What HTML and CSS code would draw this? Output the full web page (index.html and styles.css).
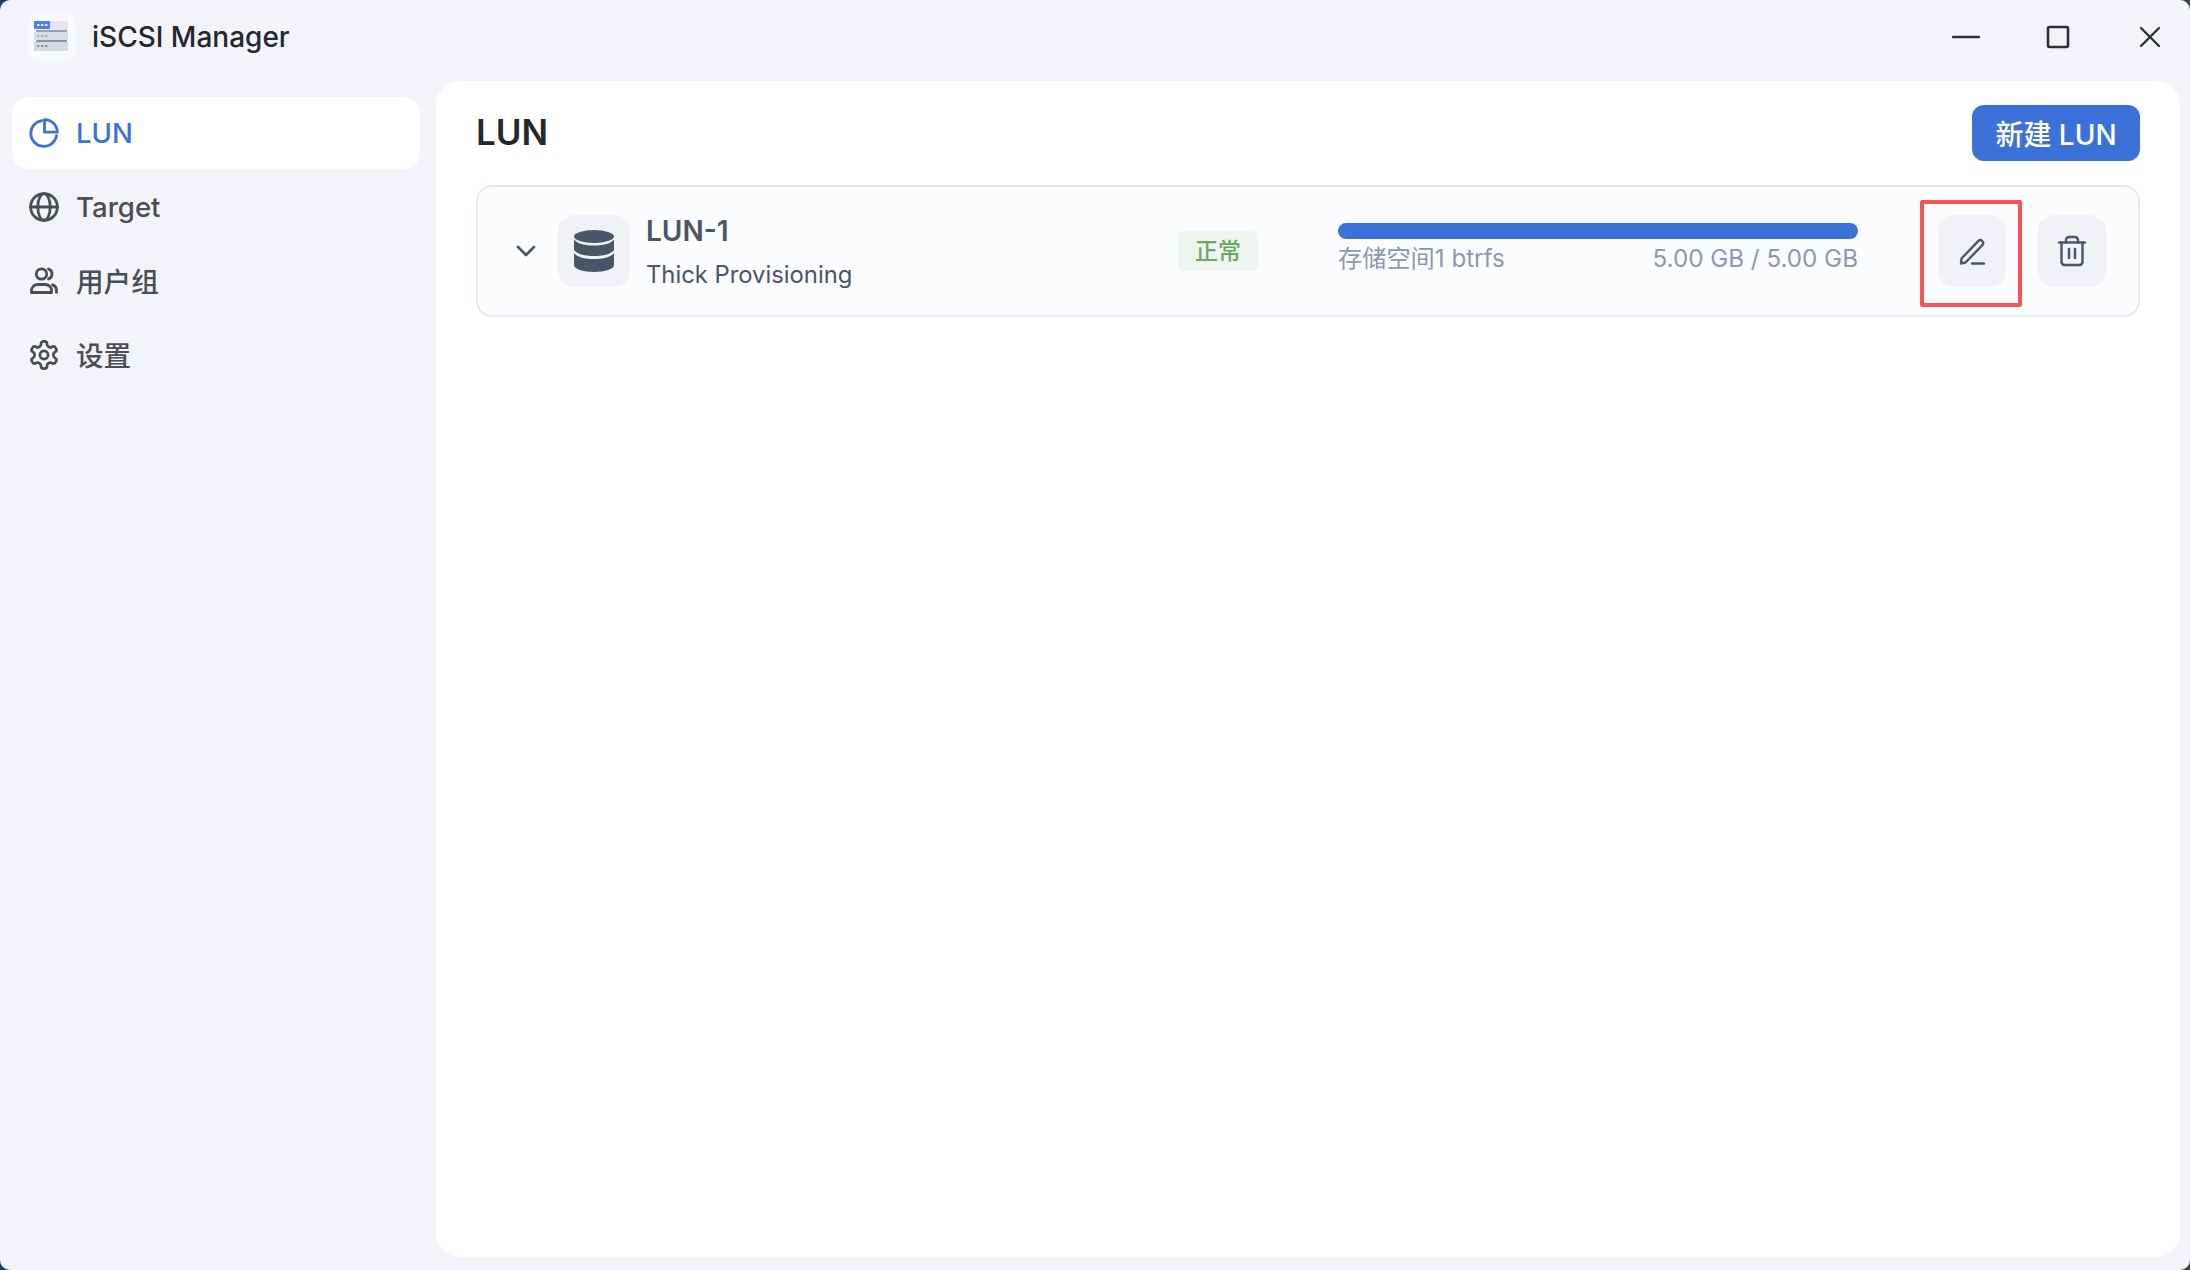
FILE: index.html
```html
<!DOCTYPE html>
<html lang="zh">
<head>
<meta charset="utf-8">
<title>iSCSI Manager</title>
<link rel="stylesheet" href="styles.css">
</head>
<body>
<div class="window">
  <header class="titlebar">
    <div class="brand">
      <div class="logo">
        <svg width="42" height="38" viewBox="0 0 42 38">
          <rect x="3" y="2" width="34" height="9" fill="#e3e7ec"/>
          <rect x="3" y="2" width="16" height="8" rx="1" fill="#4d7ff0"/>
          <rect x="6" y="5" width="2.5" height="2" fill="#dfe9ff"/><rect x="10" y="5" width="2.5" height="2" fill="#dfe9ff"/><rect x="14" y="5" width="2.5" height="2" fill="#dfe9ff"/>
          <rect x="5" y="11" width="31" height="2" fill="#98a3ae"/>
          <rect x="3" y="13" width="34" height="8" fill="#d8dee4"/>
          <rect x="6" y="16" width="2.5" height="2" fill="#a9b1ba"/><rect x="10" y="16" width="2.5" height="2" fill="#a9b1ba"/><rect x="14" y="16" width="2.5" height="2" fill="#a9b1ba"/>
          <rect x="5" y="21" width="31" height="2" fill="#8b96a1"/>
          <rect x="3" y="23" width="34" height="9" fill="#d3dae1"/>
          <rect x="6" y="26" width="2.5" height="2" fill="#8f98a2"/><rect x="10" y="26" width="2.5" height="2" fill="#8f98a2"/><rect x="14" y="26" width="2.5" height="2" fill="#8f98a2"/>
        </svg>
      </div>
      <span class="app-name">iSCSI Manager</span>
    </div>
    <div class="win-controls">
      <svg class="win-btn" width="28" height="28" viewBox="0 0 28 28"><path d="M1 14h26" stroke="#2c2f36" stroke-width="2.4" stroke-linecap="round"/></svg>
      <svg class="win-btn" width="28" height="28" viewBox="0 0 28 28"><rect x="4" y="4" width="20" height="20" rx="1.500" fill="none" stroke="#2c2f36" stroke-width="2.6"/></svg>
      <svg class="win-btn" width="28" height="28" viewBox="0 0 28 28"><path d="M5 5l18 18M23 5L5 23" stroke="#2c2f36" stroke-width="2.4" stroke-linecap="round"/></svg>
    </div>
  </header>
  <div class="content">
    <nav class="sidebar">
      <a class="nav-item active">
        <svg class="nav-icon" viewBox="0 0 30 30"><path d="M12.800 2.600A13 13 0 1 0 27.600 17.600"/><path d="M15.500 1.600A13 13 0 0 1 28.400 14.200H15.500z"/></svg>
        <span>LUN</span>
      </a>
      <a class="nav-item">
        <svg class="nav-icon" viewBox="0 0 30 30"><circle cx="15" cy="15" r="13.400"/><ellipse cx="15" cy="15" rx="6.200" ry="13.400"/><path d="M1.600 15h26.800"/></svg>
        <span>Target</span>
      </a>
      <a class="nav-item">
        <svg class="nav-icon" viewBox="0 0 30 30"><circle cx="12.500" cy="8" r="5.200"/><path d="M2.400 26.500v-1.600c0-3.600 3-6.400 6.600-6.400h7c3.600 0 6.600 2.800 6.600 6.400v1.600z"/><path d="M19.500 3a5.300 5.300 0 0 1 0 10M23.500 18.800c2.400.8 4 3 4 5.600v2"/></svg>
        <span class="cjk-label">用户组</span>
      </a>
      <a class="nav-item">
        <svg class="nav-icon" viewBox="1 1 22 22"><path class="thin" d="M12.220 2h-.44a2 2 0 0 0-2 2v.18a2 2 0 0 1-1 1.730l-.43.25a2 2 0 0 1-2 0l-.15-.08a2 2 0 0 0-2.730.73l-.22.38a2 2 0 0 0 .73 2.730l.15.1a2 2 0 0 1 1 1.720v.51a2 2 0 0 1-1 1.740l-.15.09a2 2 0 0 0-.73 2.730l.22.38a2 2 0 0 0 2.730.73l.15-.08a2 2 0 0 1 2 0l.43.25a2 2 0 0 1 1 1.730V20a2 2 0 0 0 2 2h.44a2 2 0 0 0 2-2v-.18a2 2 0 0 1 1-1.730l.43-.25a2 2 0 0 1 2 0l.15.08a2 2 0 0 0 2.730-.73l.22-.39a2 2 0 0 0-.73-2.730l-.15-.08a2 2 0 0 1-1-1.740v-.5a2 2 0 0 1 1-1.740l.15-.09a2 2 0 0 0 .73-2.730l-.22-.38a2 2 0 0 0-2.730-.73l-.15.08a2 2 0 0 1-2 0l-.43-.25a2 2 0 0 1-1-1.730V4a2 2 0 0 0-2-2z"/><circle class="thin" cx="12" cy="12" r="3"/></svg>
        <span class="cjk-label">设置</span>
      </a>
    </nav>
    <main class="panel">
      <div class="panel-head">
        <h1 class="panel-title">LUN</h1>
        <button class="primary-btn">新建 LUN</button>
      </div>
      <section class="lun-card">
        <svg class="chevron" width="20" height="12" viewBox="0 0 20 12"><path d="M2 2l8 8 8-8" fill="none" stroke="#4a5568" stroke-width="2.600" stroke-linecap="round" stroke-linejoin="round"/></svg>
        <div class="db-box">
          <svg width="40" height="42" viewBox="0 0 40 42">
            <ellipse cx="20" cy="6.500" rx="20" ry="6.500" fill="#4a5568"/>
            <path d="M0 9.500c3 4.500 12 6 20 6s17-1.500 20-6V20c-3 4.500-12 6-20 6S3 24.500 0 20z" fill="#4a5568"/>
            <path d="M0 23c3 4.500 12 6 20 6s17-1.500 20-6v12c0 4-9 7-20 7S0 39 0 35z" fill="#4a5568"/>
          </svg>
        </div>
        <div class="lun-info">
          <div class="lun-name">LUN-1</div>
          <div class="lun-type">Thick Provisioning</div>
        </div>
        <span class="badge">正常</span>
        <div class="storage">
          <div class="bar"><div class="bar-fill"></div></div>
          <div class="storage-text"><span>存储空间1 btrfs</span><span>5.00 GB / 5.00 GB</span></div>
        </div>
        <div class="actions">
          <button class="icon-btn">
            <svg width="30" height="30" viewBox="0 0 30 30" fill="none" stroke="#4a5568" stroke-width="2.400" stroke-linecap="round" stroke-linejoin="round"><path d="M4.500 22.500L21.500 4.800a2.900 2.900 0 0 1 4.100 4L8.500 26.500l-4.500 1z"/><path d="M15 27.500h12"/></svg>
            <span class="highlight"></span>
          </button>
          <button class="icon-btn">
            <svg width="30" height="32" viewBox="0 0 30 32" fill="none" stroke="#4a5568" stroke-width="2.400" stroke-linecap="round" stroke-linejoin="round"><path d="M2 7.500h26"/><path d="M9 7.500V5a3 3 0 0 1 3-3h6a3 3 0 0 1 3 3v2.500"/><path d="M4.500 7.500V27a3 3 0 0 0 3 3h15a3 3 0 0 0 3-3V7.500"/><path d="M12 14v9M18 14v9"/></svg>
          </button>
        </div>
      </section>
    </main>
  </div>
</div>
</body>
</html>
```

FILE: styles.css
```css
* { box-sizing: border-box; }
html, body { height: 100%; }
body {
  margin: 0;
  background: linear-gradient(90deg, #1f3a72 0%, #3a4150 100%);
  font-family: "Inter", "Noto Sans CJK SC", sans-serif;
  color: #4a4d55;
}
.window {
  height: 1270px;
  background: #f2f4f9;
  border-radius: 10px;
  display: flex;
  flex-direction: column;
  overflow: hidden;
}
.titlebar {
  height: 81px;
  flex: none;
  display: flex;
  align-items: center;
  justify-content: space-between;
  padding: 0 26px 8px 28px;
}
.brand { display: flex; align-items: center; gap: 16px; }
.logo {
  width: 48px;
  height: 48px;
  border-radius: 12px;
  background: #f9fafd;
  display: flex;
  align-items: center;
  justify-content: center;
  padding: 3px 0 0 0;
}
.app-name { font-size: 28px; font-weight: 500; color: #24272c; }
.win-controls { display: flex; gap: 64px; align-items: center; margin-top: 0; }
.win-btn { display: block; }
.content { flex: 1; display: flex; min-height: 0; padding-bottom: 13px; }
.sidebar {
  width: 436px;
  flex: none;
  padding: 16px 16px 0 12px;
  display: flex;
  flex-direction: column;
  gap: 2px;
}
.nav-item {
  height: 72px;
  border-radius: 16px;
  display: flex;
  align-items: center;
  gap: 17px;
  padding-left: 17px;
  font-size: 27.6px;
  font-weight: 500;
  color: #4a4d55;
}
.nav-item.active { background: #fff; color: #3b71d9; }
.cjk-label { margin-top: -3px; }
.nav-icon {
  width: 30px;
  height: 30px;
  flex: none;
  fill: none;
  stroke: currentColor;
  stroke-width: 2.8;
  stroke-linecap: round;
  stroke-linejoin: round;
}
.nav-icon .thin { stroke-width: 2; }
.panel {
  flex: 1;
  margin-right: 10px;
  background: #fff;
  border-radius: 24px;
  padding: 24px 40px;
}
.panel-head {
  display: flex;
  align-items: center;
  justify-content: space-between;
  margin-bottom: 24px;
}
.panel-title { margin: 0; font-size: 35px; font-weight: 600; color: #24272c; line-height: 54px; padding-bottom: 2px; }
.primary-btn {
  width: 168px;
  height: 56px;
  border: 0;
  border-radius: 12px;
  background: #3b71d9;
  color: #fff;
  font-family: inherit;
  font-size: 28px;
  font-weight: 500;
  padding: 0;
}
.lun-card {
  height: 132px;
  border: 2px solid #e4e8f0;
  border-radius: 16px;
  background: #fbfcfe;
  display: flex;
  align-items: center;
  padding: 0 32px 0 38px;
}
.chevron { flex: none; }
.db-box {
  width: 72px;
  height: 72px;
  margin-left: 22px;
  flex: none;
  border-radius: 16px;
  background: #f1f2f5;
  display: flex;
  align-items: center;
  justify-content: center;
}
.lun-info { width: 532px; margin-left: 16px; flex: none; color: #4a5568; padding-top: 2px; }
.lun-name { font-size: 28px; font-weight: 600; line-height: 36px; margin-bottom: 9px; }
.lun-type { font-size: 23.8px; line-height: 34px; }
.badge {
  width: 80px;
  height: 40px;
  flex: none;
  border-radius: 6px;
  background: #eef5ee;
  color: #6aa864;
  font-size: 23px;
  font-weight: 500;
  line-height: 40px;
  text-align: center;
}
.storage { width: 520px; margin: -3px 0 0 80px; flex: none; }
.bar { height: 16px; border-radius: 8px; background: #e4e8f0; overflow: hidden; }
.bar-fill { height: 100%; width: 100%; background: #3b71d9; }
.storage-text {
  display: flex;
  justify-content: space-between;
  margin-top: 3px;
  font-size: 24.2px;
  line-height: 34px;
  color: #8a99b0;
}
.actions { display: flex; gap: 32px; margin-left: 80px; flex: none; }
.icon-btn {
  position: relative;
  width: 68px;
  height: 72px;
  border: 0;
  border-radius: 16px;
  background: #f1f2f5;
  padding: 0;
  display: flex;
  align-items: center;
  justify-content: center;
}
.highlight {
  position: absolute;
  left: -18px;
  top: -15px;
  width: 102px;
  height: 107px;
  border: 4px solid #f55555;
  border-radius: 2px;
}
```
